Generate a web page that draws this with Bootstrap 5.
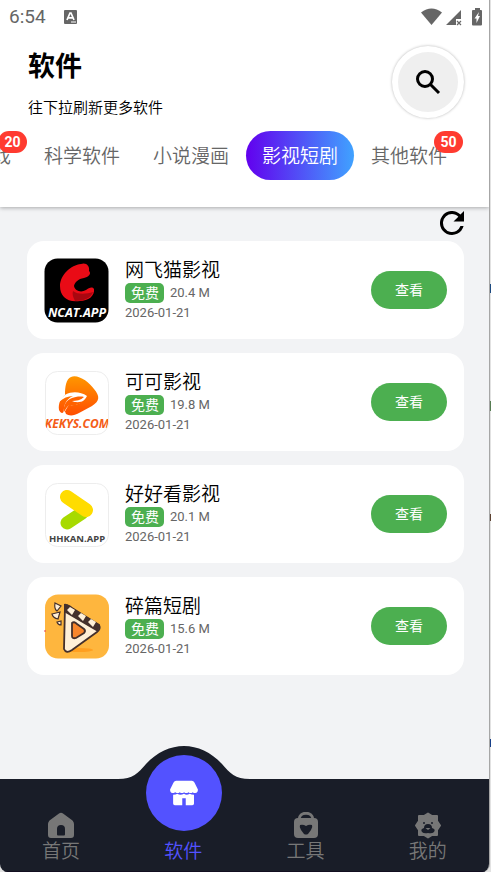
<!DOCTYPE html>
<html lang="zh-CN">
<head>
<meta charset="utf-8">
<meta name="viewport" content="width=device-width, initial-scale=1">
<title>软件</title>
<link href="https://cdn.jsdelivr.net/npm/bootstrap@5.3.0/dist/css/bootstrap.min.css" rel="stylesheet">
<style>
body{font-family:Roboto,"Noto Sans CJK SC",sans-serif;color:#000;background:#e2e2e2;
  background-image:linear-gradient(#e2e2e2 284px,#1d4a80 284px 293px,#e2e2e2 293px 401px,#567c52 401px 411px,#e2e2e2 411px 514px,#5c4130 514px 521px,#e2e2e2 521px 739px,#173f88 739px 747px,#e2e2e2 747px)}
.shell{min-height:100vh;margin-right:1px;background:#f2f3f5;border-right:1px solid #a6a6a6;border-radius:0 0 8px 8px;overflow:hidden}
.topbar{background:#fff;box-shadow:0 1px 4px rgba(0,0,0,.3);padding-bottom:27px}
.status{height:34px;padding:0 6px 0 9px;color:#666}
.clock{font-size:19px;line-height:34px}
.heading{padding:12px 25px 0 28px;height:97px}
.heading h1{font-size:27px;line-height:40px;font-weight:700;margin:1px 0 10px}
.heading p{font-size:15px;line-height:22px;font-weight:350;margin:0}
.search{width:72px;height:72px;border:6px solid #fff;border-radius:50%;background:#efefef;box-shadow:0 0 3px rgba(0,0,0,.3);padding:0}
.tabs{gap:1px;margin-right:26px}
.tabs button{position:relative;flex:none;border:0;background:none;color:#666;font-size:19px;line-height:29px;padding:11px 16px 9px;border-radius:25px;font-weight:350}
.tabs button.active{color:#fff;background:linear-gradient(90deg,#6200ee,#40a2ff)}
.tabs .count{position:absolute;top:0;right:0;min-width:29px;background:#ff3b30;color:#fff;border-radius:11px;font-size:14px;line-height:22px;font-weight:700;text-align:center}
.content{padding:4px 25px 104px 27px}
.refresh{border:0;background:none;padding:0;height:24px;line-height:0}
.apps{gap:14px;margin:6px 0 0;padding:0;list-style:none}
.app-item{background:#fff;border-radius:17px;padding:16px 17px;gap:16px;min-height:98px}
.app-item h2{font-size:19px;line-height:25px;font-weight:350;margin:0}
.app-item .logo{width:65px;height:65px;flex:none}
.info{font-size:13px;line-height:20px;color:#666}
.meta{gap:6px}
.free{background:#4caf50;color:#fff;border-radius:5px;font-size:14px;padding:0 5px 0 6px;line-height:20px;height:20px}
.view{width:76px;height:38px;border:0;border-radius:19px;background:#4caf50;color:#fff;font-size:14px}
.bottom{background:#191d28;position:relative;height:93px;border-bottom:1px solid #120e20}
.bottom a{position:relative;color:#777;text-decoration:none;font-size:19px;line-height:25px;font-weight:350;padding-top:33px}
.bottom a>span,.bottom a>.glyph{position:relative}
.bottom a.active{color:#5352ff}
.bottom .hill{position:absolute;left:50%;top:-33px;margin-left:-65px}
</style>
<script src="https://cdn.jsdelivr.net/npm/bootstrap@5.3.0/dist/js/bootstrap.bundle.min.js"></script>
</head>
<body>
<div class="shell d-flex flex-column">
<header class="topbar">
  <div class="status d-flex align-items-center justify-content-between">
    <div class="d-flex align-items-center gap-3"><span class="clock">6:54</span>
      <svg width="16" height="16" viewBox="0 0 16 16" aria-hidden="true"><rect x="2" y="1" width="13" height="14" rx="1" fill="#666"/><path d="M5 11 8 4h1l3 7M6.200 8.800h4.600" fill="none" stroke="#fff" stroke-width="1.700"/><path d="M9 13h5" stroke="#fff"/></svg>
    </div>
    <svg width="62" height="20" viewBox="0 0 62 20" aria-hidden="true" fill="#666"><path d="M0 5.500Q10.500-2.500 21 5.500L10.500 18z"/><path d="M25 18 40 3v9h-5v6z"/><path d="m36 14 4 4m0-4-4 4" stroke="#666" stroke-width="1.200"/><path d="M54 1h5v2h1q1 0 1 1v13.500q0 1-1 1h-8q-1 0-1-1V4q0-1 1-1h2z"/><path d="m58 5-4.500 6.500h2V16l3.500-7h-2z" fill="#fff"/></svg>
  </div>
  <div class="heading d-flex justify-content-between">
    <div><h1>软件</h1><p>往下拉刷新更多软件</p></div>
    <button class="search" type="button" aria-label="搜索"><svg width="26" height="26" viewBox="0 0 26 26" fill="none" stroke="#000" stroke-width="3"><circle cx="10" cy="10" r="7.500"/><path d="m15.500 15.500 8.500 8.500"/></svg></button>
  </div>
  <nav class="tabs d-flex justify-content-end" aria-label="分类">
    <button type="button">游戏<span class="count">20</span></button>
    <button type="button">科学软件</button>
    <button type="button">小说漫画</button>
    <button type="button" class="active">影视短剧</button>
    <button type="button">其他软件<span class="count">50</span></button>
  </nav>
</header>
<main class="content flex-grow-1">
  <div class="d-flex justify-content-end"><button class="refresh" type="button" aria-label="刷新"><svg width="24" height="24" viewBox="4 4 16 16"><path d="M17.650 6.350A8 8 0 1 0 19.730 14h-2.080A6 6 0 1 1 12 6c1.660 0 3.140.690 4.220 1.780L13 11h7V4z"/></svg></button></div>
  <ul class="apps d-flex flex-column">
    <li class="app-item d-flex align-items-center">
      <svg class="logo" viewBox="0 0 65 65" role="img" aria-label="NCAT.APP"><rect x=".5" y=".5" width="64" height="64" rx="13"/><path d="M37 6c5-2 9 2 8 7 3 3-1 6-5 7-6 1-9 4-10 8 1 5 7 7 12 4 3-2 6-4 8-1 1 7-6 12-14 12-13 2-20-5-20-15C16 17 27 7 37 6z" fill="#e90b16"/><path d="M29 33c5 4 14 3 20 1-2 6-9 9-18 9-2-4-3-7-2-10z" fill="#a90710"/><text x="33" y="59" text-anchor="middle" font-family="Open Sans" font-size="12.500" font-weight="700" font-style="italic" fill="#fff">NCAT.APP</text></svg>
      <div class="flex-grow-1"><h2>网飞猫影视</h2><div class="info"><div class="meta d-flex align-items-center"><span class="free">免费</span>20.4 M</div><div>2026-01-21</div></div></div>
      <button class="view" type="button">查看</button>
    </li>
    <li class="app-item d-flex align-items-center">
      <svg class="logo" viewBox="0 0 65 65" role="img" aria-label="KEKYS.COM"><defs><linearGradient id="orange" x1="0" y1="0" x2="0" y2="1"><stop stop-color="#ff9700"/><stop offset="1" stop-color="#ff4d00"/></linearGradient><clipPath id="tile"><rect x="1" y="1" width="63" height="63" rx="12"/></clipPath></defs><rect x="1.500" y="1.500" width="63" height="63" rx="12" fill="#fff" stroke="#ededed"/><path d="M27 7c-5 2-6 10-6 18-4 3-7 8-6 15 2 4 5 4 5-1l2 5c3 2 8 2 13-1l13-7c8-5 8-10 2-17C45 12 34 4 27 7z" fill="url(#orange)"/><path d="M15 32c5-11 19-12 28-6-3 6-10 10-18 9-2 2-3 5-5 8-1-7 2-14 9-17-5 0-10 2-14 6z" fill="#fff"/><path d="M20 42c-1-6 2-12 8-14 3-1 8-2 12-1-3 3-8 4-12 4 4 2 9 1 12 0-4 3-9 5-14 4-3 1-4 4-6 7z" fill="#ff6200"/><g clip-path="url(#tile)"><text x="33" y="58" text-anchor="middle" font-family="Open Sans" font-size="12" font-weight="700" font-style="italic" fill="#f45c16">KEKYS.COM</text></g></svg>
      <div class="flex-grow-1"><h2>可可影视</h2><div class="info"><div class="meta d-flex align-items-center"><span class="free">免费</span>19.8 M</div><div>2026-01-21</div></div></div>
      <button class="view" type="button">查看</button>
    </li>
    <li class="app-item d-flex align-items-center">
      <svg class="logo" viewBox="0 0 65 65" role="img" aria-label="HHKAN.APP"><rect x="1.500" y="1.500" width="63" height="63" rx="12" fill="#fff" stroke="#ededed"/><path d="m23 41 15-10" stroke="#a7da00" stroke-width="13" stroke-linecap="round"/><path d="m23 15 19 13" stroke="#ffdc00" stroke-width="14" stroke-linecap="round"/><text x="33" y="60" text-anchor="middle" font-family="Noto Sans" font-size="9.500" font-weight="700" fill="#444">HHKAN.APP</text></svg>
      <div class="flex-grow-1"><h2>好好看影视</h2><div class="info"><div class="meta d-flex align-items-center"><span class="free">免费</span>20.1 M</div><div>2026-01-21</div></div></div>
      <button class="view" type="button">查看</button>
    </li>
    <li class="app-item d-flex align-items-center">
      <svg class="logo" viewBox="0 0 65 65" role="img" aria-label="碎篇短剧"><rect x="1" y=".5" width="64" height="64" rx="13" fill="#feb63e"/><ellipse cx="35" cy="56" rx="14" ry="2" fill="#ff9f20"/><path d="M21 12q3-2 7 2l27 17q2 4-2 7L28 56q-6 4-8-1z" fill="#fff0d8" stroke="#44302c" stroke-width="1.800"/><path d="M20 10q3-1 7 3l29 18-2 7-34-20z" fill="#44302c"/><path d="m23 16 3-3 5 3-3 5zm11 6 3-3 5 3-3 5zm10 6 3-3 5 3-3 5z" fill="#fff0d8"/><path d="M28 29q2-2 5 1l7 5q2 2 0 4l-8 5q-4 1-4-2z" fill="#f8862c" stroke="#44302c" stroke-width="1.800"/><path d="m11 9 6 3-4 5q-3-2-2-8zm-3 11 8-2-2 7q-5-1-6-5zm5 8 4-1v4q-3 0-4-3z" fill="#fff0d8" stroke="#44302c" stroke-width="1.200"/><path d="M0 37h2" stroke="#e5414c"/></svg>
      <div class="flex-grow-1"><h2>碎篇短剧</h2><div class="info"><div class="meta d-flex align-items-center"><span class="free">免费</span>15.6 M</div><div>2026-01-21</div></div></div>
      <button class="view" type="button">查看</button>
    </li>
  </ul>
</main>
<nav class="bottom row g-0" aria-label="主导航">
  <a href="#" class="col d-flex flex-column align-items-center"><svg class="glyph" width="28" height="27" viewBox="0 0 28 27"><path fill-rule="evenodd" d="M12 1.500q2-1.500 4 0l9.500 7Q27 10 27 12v11q0 3-3 3H4q-3 0-3-3V12q0-2 1.500-3.500zM11 23.500h6q1 0 1-1V17a4 4 0 0 0-8 0v5.500q0 1 1 1z" fill="#777"/></svg><span>首页</span></a>
  <a href="#" class="col d-flex flex-column align-items-center active" aria-current="page">
    <svg class="hill" width="132" height="90" viewBox="0 0 132 90"><path d="M0 33C15 33 20 27 28 18 50-6 82-6 104 18 112 27 117 33 132 33V36H0z" fill="#191d28"/><circle cx="66" cy="47" r="38" fill="#5352ff"/><g transform="translate(66 47) scale(.87) translate(-66 -48)" fill="#fff"><path d="M57 34h18q2 0 3 2l4 8q0 4-3 4-2 0-3-1-2 2-5 0-2 2-5 0-2 2-5 0-2 2-5 0-6 3-6-3l4-8q1-2 3-2z"/><path d="M53.500 50q3 0 5-1 3 2 7.500 0 3 2 6.500 0 2 1 5 1v10q0 2-2 2H68v-8h-4v8h-8.500q-2 0-2-2z"/></g></svg>
    <svg class="glyph" width="28" height="27" visibility="hidden"></svg><span>软件</span></a>
  <a href="#" class="col d-flex flex-column align-items-center"><svg class="glyph" width="26" height="27" viewBox="0 0 26 27"><path d="M6 8C6-1 20-1 20 8" fill="none" stroke="#777" stroke-width="3"/><rect x="1" y="6" width="24" height="20" rx="4" fill="#777"/><path d="M9 6q4-5 8 0z" fill="#191d28"/><path d="M7 13q3-1 6 1 3-2 6-1 1 2-1 5l-3 4q-2 1-4 0l-3-4q-2-3-1-5z" fill="#191d28"/></svg><span>工具</span></a>
  <a href="#" class="col d-flex flex-column align-items-center"><svg class="glyph" width="28" height="27" viewBox="0 0 28 27"><path d="m14 1.500 4 2.500h5v5l3 4.500-3 4.500v5h-5l-4 2.500-4-2.500H5v-5l-3-4.500L5 9V4h5z" fill="#777" stroke="#777" stroke-width="2" stroke-linejoin="round"/><path d="M8 20q-2-3 2-4 0-4 4-4t4 4q4 1 2 4-2 2-6 1-4 1-6-1z" fill="#191d28"/><circle cx="10" cy="11" r="1" fill="#191d28"/><circle cx="18" cy="11" r="1" fill="#191d28"/><path d="M11.500 16h5l-2.500 2z" fill="#777"/></svg><span>我的</span></a>
</nav>
</div>
</body>
</html>
